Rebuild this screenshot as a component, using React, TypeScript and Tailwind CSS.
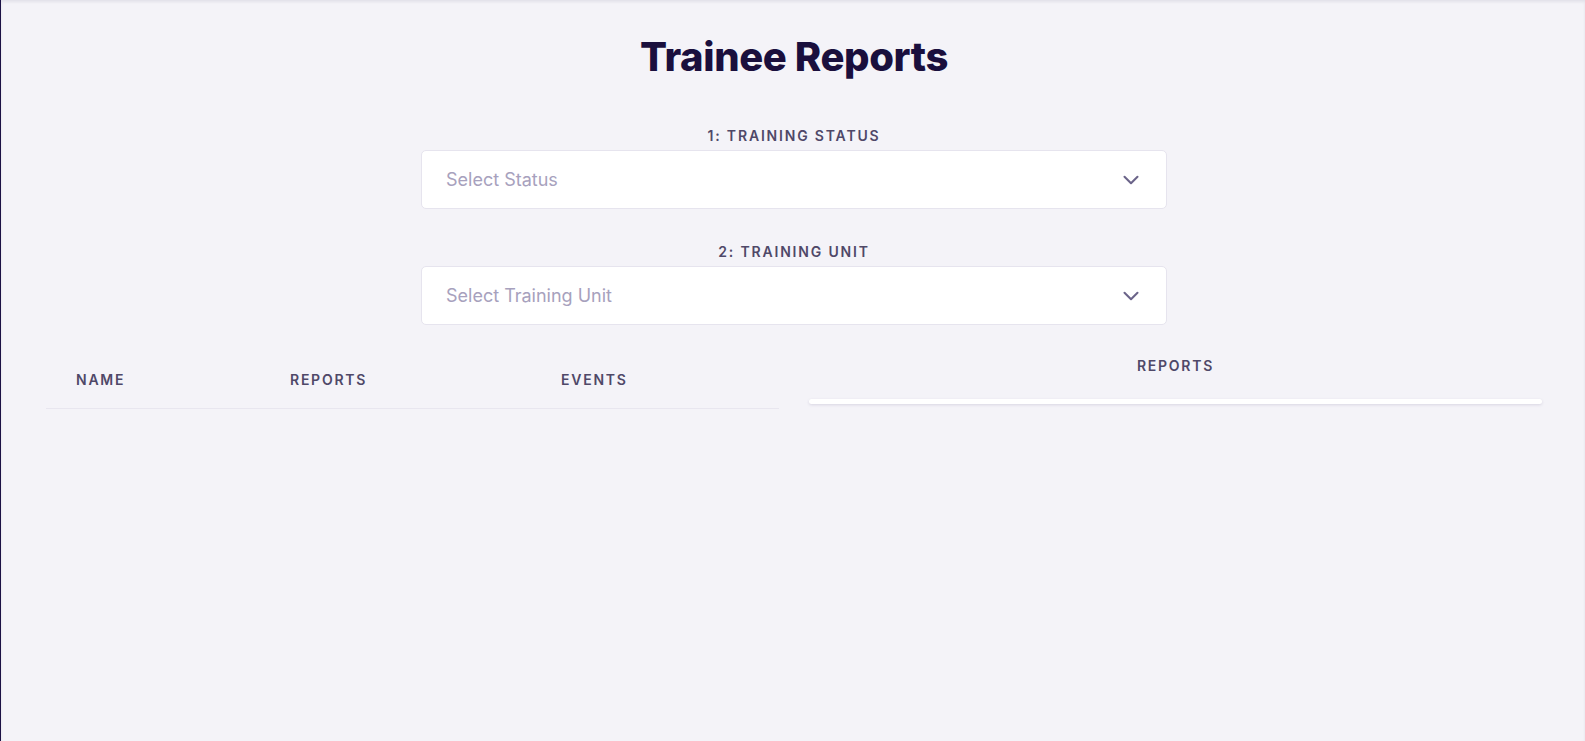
import { ChevronDown } from 'lucide-react';

const font = { fontFamily: 'Inter, "Noto Sans", sans-serif' };

function SelectField({ label, placeholder }: { label: string; placeholder: string }) {
  return (
    <div className="flex flex-col items-center">
      <label className="text-[14px] leading-5 font-semibold tracking-[0.13em] uppercase text-[#4f4868]">{label}</label>
      <button
        type="button"
        className="mt-[4px] w-[746px] h-[59px] flex items-center justify-between pl-[24px] pr-[22px] bg-white border border-[#e6e4ee] rounded-[5px] text-left"
      >
        <span className="text-[18px] text-[#a7a1bd]">{placeholder}</span>
        <ChevronDown className="w-[26px] h-[26px] text-[#6b6489]" strokeWidth={1.9} />
      </button>
    </div>
  );
}

export default function App() {
  return (
    <div style={font} className="min-h-screen bg-[#f4f3f8] border-l border-[#1b1145]">
      <div className="min-h-screen shadow-[inset_0_2px_3px_rgba(30,20,70,0.08)] pl-[45px] pr-[43px] pt-[37px]">
        <h1 className="text-center text-[40px] leading-none font-extrabold text-[#1a0f3d] tracking-[-0.01em]">
          Trainee Reports
        </h1>

        <div className="mt-[49px] flex flex-col gap-[33px]">
          <SelectField label="1: Training Status" placeholder="Select Status" />
          <SelectField label="2: Training Unit" placeholder="Select Training Unit" />
        </div>

        <div className="mt-[27px] grid grid-cols-2 gap-[30px]">
          <div>
            <div className="grid grid-cols-[214px_271px_1fr] border-b border-[#e8e6ef] text-[14px] leading-5 font-semibold tracking-[0.125em] uppercase text-[#4f4868]">
              <div className="px-[30px] py-[18px]">Name</div>
              <div className="px-[30px] py-[18px]">Reports</div>
              <div className="px-[30px] py-[18px]">Events</div>
            </div>
          </div>
          <div className="pt-[4px]">
            <div className="text-center text-[14px] leading-5 font-semibold tracking-[0.125em] uppercase text-[#4f4868]">
              Reports
            </div>
            <div className="mt-[23px] h-[5px] bg-white rounded-[4px] shadow-[0_1px_3px_rgba(60,50,110,0.15)]" />
          </div>
        </div>
      </div>
    </div>
  );
}
